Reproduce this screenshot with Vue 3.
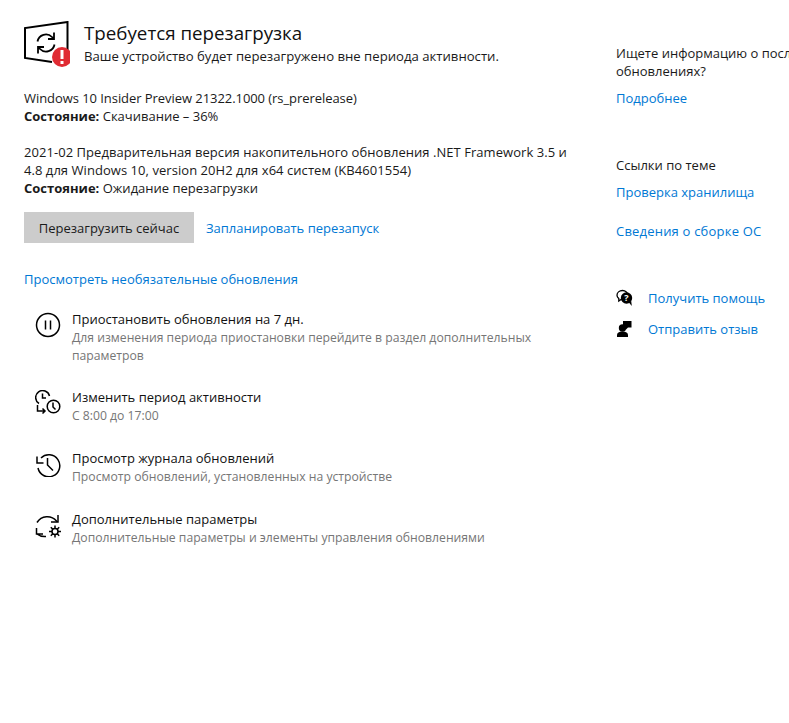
<script setup>
const rows = [
  { id: 'pause', title: 'Приостановить обновления на 7 дн.', desc: 'Для изменения периода приостановки перейдите в раздел дополнительных параметров' },
  { id: 'clock', title: 'Изменить период активности', desc: 'С 8:00 до 17:00' },
  { id: 'history', title: 'Просмотр журнала обновлений', desc: 'Просмотр обновлений, установленных на устройстве' },
  { id: 'gear', title: 'Дополнительные параметры', desc: 'Дополнительные параметры и элементы управления обновлениями' },
]
</script>

<template>
  <div class="page">
    <main class="main">
      <div class="header">
        <svg class="hero" width="46" height="48" viewBox="0 0 46 48" fill="none">
          <path d="M28 41 1 37V7L43.500 1V29" stroke="#000" stroke-width="2" />
          <path d="M13.500 20.500A8.500 8.500 0 0 1 28 16l2 2M30 11.500V18H24" stroke="#000" stroke-width="1.800" />
          <path d="M30.500 23.500A8.500 8.500 0 0 1 16 28l-2-2M14 32.500V26h6" stroke="#000" stroke-width="1.800" />
          <circle cx="38" cy="36" r="10" fill="#e02b33" />
          <rect x="36.500" y="29" width="3" height="9" fill="#fff" />
          <rect x="36.500" y="40" width="3" height="3" fill="#fff" />
        </svg>
        <div>
          <h1>Требуется перезагрузка</h1>
          <p>Ваше устройство будет перезагружено вне периода активности.</p>
        </div>
      </div>

      <section class="update first">
        <div class="tight">Windows 10 Insider Preview 21322.1000 (rs_prerelease)</div>
        <div><b>Состояние:</b> Скачивание – 36%</div>
      </section>
      <section class="update second">
        <div class="loose">2021-02 Предварительная версия накопительного обновления .NET Framework 3.5 и</div>
        <div class="loose">4.8 для Windows 10, version 20H2 для x64 систем (KB4601554)</div>
        <div><b>Состояние:</b> Ожидание перезагрузки</div>
      </section>

      <div class="actions">
        <button>Перезагрузить сейчас</button>
        <a>Запланировать перезапуск</a>
      </div>
      <a class="optional">Просмотреть необязательные обновления</a>

      <ul class="options">
        <li v-for="row in rows" :key="row.id">
          <svg width="26" height="26" viewBox="0 0 26 26" fill="none" stroke="#000" stroke-width="1.500">
            <template v-if="row.id === 'pause'">
              <circle cx="13" cy="13" r="11.500" />
              <path d="M10.500 8.500v9M15.500 8.500v9" />
            </template>
            <template v-else-if="row.id === 'clock'">
              <path d="M4 13.500A7 7 0 1 1 14.500 6" />
              <path d="M7.500 3.500V8H11" />
              <circle cx="18.500" cy="16.500" r="6.300" />
              <path d="M18 12.500V17l2.500 2.500" />
              <path d="M2.500 15v6H10M7.500 18.500 10 21l-2.500 2.500" />
            </template>
            <template v-else-if="row.id === 'history'">
              <path d="M6 7A11 11 0 1 1 3 17" />
              <path d="M2 5.500V12h6.500M12.500 7v7l5.500 5.500" />
            </template>
            <template v-else>
              <path d="M2 10.500A12 12 0 0 1 21.500 9l1 1" />
              <path d="M23 3v7h-7" />
              <path d="M1.500 16v6H8M2 22A12 12 0 0 0 11 24.500" />
              <circle cx="20" cy="19.500" r="3" />
              <path d="M20 13.500v3M20 22.500v3M14 19.500h3M23 19.500h3M15.800 15.300l2 2M22.200 21.700l2 2M24.200 15.300l-2 2M17.800 21.700l-2 2" />
            </template>
          </svg>
          <div class="text">
            <div class="title">{{ row.title }}</div>
            <div class="desc">{{ row.desc }}</div>
          </div>
        </li>
      </ul>
    </main>

    <aside class="side">
      <div class="info">Ищете информацию о последних обновлениях?</div>
      <a class="more">Подробнее</a>
      <div class="related">Ссылки по теме</div>
      <a class="check">Проверка хранилища</a>
      <a class="build">Сведения о сборке ОС</a>
      <div class="help first-help">
        <svg width="18" height="18" viewBox="0 0 18 18">
          <path d="M6.500 1.500C3.300 1.500 1 3.600 1 6.200c0 1.400.7 2.600 1.800 3.400V12l2.300-1.500c.5.100.9.200 1.400.2 3 0 5.500-2 5.500-4.500S9.500 1.500 6.500 1.500Z" fill="#fff" stroke="#000" stroke-width="1.300" />
          <circle cx="10.500" cy="9" r="5.700" fill="#000" />
          <path d="M12.500 13 15.800 17 15.200 12Z" fill="#000" />
          <text x="10.500" y="12" class="q">?</text>
        </svg>
        <a>Получить помощь</a>
      </div>
      <div class="help">
        <svg width="18" height="18" viewBox="0 0 18 18" fill="#000">
          <path d="M7 1h8.500v6.500H12L10 9.500v-2H7Z" />
          <circle cx="6.500" cy="8" r="3.700" />
          <path d="M1 17v-2c0-2 2-3.500 5.500-3.500S12 13 12 15v2Z" />
        </svg>
        <a>Отправить отзыв</a>
      </div>
    </aside>
  </div>
</template>

<style>
html, body { margin: 0; background: #fff; overflow: hidden; }
</style>

<style scoped>
.page {
  width: 789px;
  height: 723px;
  overflow: hidden;
  display: flex;
  font-family: "Open Sans", "Noto Sans", sans-serif;
  font-size: 13px;
  line-height: 18px;
  color: #1a1a1a;
}
.main { width: 616px; flex: none; padding: 21px 0 0 24px; box-sizing: border-box; }
a { color: #0078d4; display: block; }
.header { display: flex; gap: 14px; height: 48px; }
.hero { flex: none; }
h1 { margin: 0; font-size: 18.750px; font-weight: 400; line-height: 24px; color: #111; }
p { margin: 2px 0 0; line-height: 18px; font-size: 13.150px; }
.update { white-space: nowrap; }
.tight { letter-spacing: -0.06px; }
.loose { letter-spacing: 0.05px; }
.first { margin-top: 20px; }
.second { margin-top: 18px; }
b { font-weight: 700; }
.actions { display: flex; align-items: center; gap: 12px; margin-top: 15px; }
button {
  width: 170px; height: 31px; border: 0; padding: 0; background: #ccc;
  font: inherit; color: #1a1a1a;
}
.optional { margin-top: 27px; }
.options { list-style: none; margin: 22px 0 0; padding: 0 0 0 11px; }
li { display: flex; gap: 11px; margin-bottom: 24px; }
li:first-child { margin-bottom: 23px; }
li svg { flex: none; margin-top: 2px; }
.text { width: 470px; }
.title { color: #111; line-height: 19px; }
.desc { color: #767676; font-size: 12.200px; line-height: 18px; }
.side { flex: none; width: 173px; padding-top: 44px; white-space: nowrap; }
.info { width: 225px; white-space: normal; }
.more { margin-top: 9px; }
.related { margin-top: 49px; }
.check { margin-top: 9px; }
.build { margin-top: 21px; letter-spacing: 0.2px; }
.help { display: flex; gap: 14px; align-items: center; margin-top: 13px; }
.first-help { margin-top: 49px; }
.q { fill: #fff; font-size: 9px; font-weight: 700; text-anchor: middle; }
</style>
